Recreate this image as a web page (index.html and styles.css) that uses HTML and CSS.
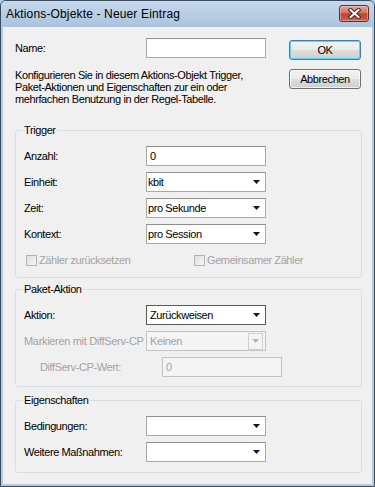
FILE: index.html
```html
<!DOCTYPE html>
<html lang="de">
<head>
  <meta charset="UTF-8">
  <meta name="viewport" content="width=device-width, initial-scale=1.0">
  <title>Aktions-Objekte - Neuer Eintrag</title>
  <link rel="stylesheet" href="styles.css">
</head>
<body>

  <div class="window">
    <div class="titlebar">
      <span class="title">Aktions-Objekte - Neuer Eintrag</span>
      <button class="close" aria-label="Schließen">
        <svg width="13" height="11" viewBox="0 0 13 11">
          <path d="M2.5 2 L10.5 9 M10.5 2 L2.5 9" stroke="#4b2019" stroke-width="4" stroke-linecap="square" fill="none"/>
          <path d="M2.5 2 L10.5 9 M10.5 2 L2.5 9" stroke="#fff" stroke-width="2" stroke-linecap="square" fill="none"/>
        </svg>
      </button>
    </div>

    <div class="client">
      <div class="top">
        <div class="intro">
          <div class="field name-row">
            <label for="name">Name:</label>
            <input class="edit" type="text" id="name">
          </div>
          <p class="hint">Konfigurieren Sie in diesem Aktions-Objekt Trigger,<br>Paket-Aktionen und Eigenschaften zur ein oder<br>mehrfachen Benutzung in der Regel-Tabelle.</p>
        </div>
        <div class="buttons">
          <button class="btn default">OK</button>
          <button class="btn">Abbrechen</button>
        </div>
      </div>

      <!-- Trigger -->
      <fieldset class="group trigger">
        <legend>Trigger</legend>
        <div class="field">
          <label>Anzahl:</label>
          <input class="edit" type="text" value="0">
        </div>
        <div class="field">
          <label>Einheit:</label>
          <div class="combo"><span class="value">kbit</span><svg class="arrow" width="7" height="4" viewBox="0 0 7 4"><polygon points="0,0 7,0 3.5,4" fill="#10104a"/></svg></div>
        </div>
        <div class="field">
          <label>Zeit:</label>
          <div class="combo"><span class="value">pro Sekunde</span><svg class="arrow" width="7" height="4" viewBox="0 0 7 4"><polygon points="0,0 7,0 3.5,4" fill="#10104a"/></svg></div>
        </div>
        <div class="field">
          <label>Kontext:</label>
          <div class="combo"><span class="value">pro Session</span><svg class="arrow" width="7" height="4" viewBox="0 0 7 4"><polygon points="0,0 7,0 3.5,4" fill="#10104a"/></svg></div>
        </div>
        <div class="field checks">
          <span class="check first"><span class="box"></span>Zähler zurücksetzen</span>
          <span class="check"><span class="box"></span>Gemeinsamer Zähler</span>
        </div>
      </fieldset>

      <!-- Paket-Aktion -->
      <fieldset class="group paket">
        <legend>Paket-Aktion</legend>
        <div class="field">
          <label>Aktion:</label>
          <div class="combo focused"><span class="value">Zurückweisen</span><svg class="arrow" width="7" height="4" viewBox="0 0 7 4"><polygon points="0,0 7,0 3.5,4" fill="#10104a"/></svg></div>
        </div>
        <div class="field disabled">
          <label class="tight">Markieren mit DiffServ-CP</label>
          <div class="combo off"><span class="value">Keinen</span><span class="drop"><svg width="7" height="4" viewBox="0 0 7 4"><polygon points="0,0 7,0 3.5,4" fill="#b4b4b4"/></svg></span></div>
        </div>
        <div class="field disabled">
          <label class="indent">DiffServ-CP-Wert:</label>
          <input class="edit off" type="text" value="0" disabled>
        </div>
      </fieldset>

      <!-- Eigenschaften -->
      <fieldset class="group props">
        <legend>Eigenschaften</legend>
        <div class="field">
          <label>Bedingungen:</label>
          <div class="combo"><span class="value"></span><svg class="arrow" width="7" height="4" viewBox="0 0 7 4"><polygon points="0,0 7,0 3.5,4" fill="#10104a"/></svg></div>
        </div>
        <div class="field">
          <label>Weitere Maßnahmen:</label>
          <div class="combo"><span class="value"></span><svg class="arrow" width="7" height="4" viewBox="0 0 7 4"><polygon points="0,0 7,0 3.5,4" fill="#10104a"/></svg></div>
        </div>
      </fieldset>
    </div>
  </div>

</body>
</html>
```

FILE: styles.css
```css
body {
  margin: 0;
  font-family: 'Liberation Sans', Arial, sans-serif;
  font-size: 11px;
  letter-spacing: -0.4px;
  color: #000;
  background-color: #b6cbe3;
}

/* Window frame */
.window {
  box-sizing: border-box;
  width: 375px;
  height: 487px;
  border: 1px solid #3a4a5f;
  border-radius: 6px 6px 0 0;
  background-color: #b6cbe3;
  padding: 0 2px 2px;
  display: flex;
  flex-direction: column;
}

.titlebar {
  height: 26px;
  margin: 0 -2px;
  padding: 0 5px 0 5px;
  display: flex;
  align-items: flex-start;
  border-radius: 5px 5px 0 0;
  background: linear-gradient(#c6d8ec, #abc3de);
}

.title {
  margin-top: 6px;
  font-size: 12px;
  line-height: 14px;
  letter-spacing: 0.15px;
}

.close {
  margin: 4px 0 0 auto;
  width: 30px;
  height: 17px;
  padding: 0;
  border: 1px solid #73291f;
  border-radius: 3px;
  background: linear-gradient(#e3a296 0%, #d57465 45%, #c3402f 52%, #cf5f4d 100%);
  box-shadow: inset 0 0 0 1px rgba(255, 255, 255, 0.35);
  display: flex;
  align-items: center;
  justify-content: center;
}

.client {
  flex: 1;
  background-color: #f0f0f0;
  padding: 11px 10px 0 12px;
}

/* Top area */
.top {
  display: flex;
  justify-content: space-between;
}

.field {
  display: flex;
  align-items: center;
  height: 20px;
}

.field label {
  width: 122px;
  flex-shrink: 0;
  line-height: 12px;
  white-space: nowrap;
}

.field label.tight {
  letter-spacing: -0.32px;
}

.name-row label {
  width: 131px;
}

.hint {
  margin: 11px 0 0;
  line-height: 12px;
}

.buttons {
  display: flex;
  flex-direction: column;
  margin-right: 1px;
}

.btn {
  width: 72px;
  height: 20px;
  margin-top: 9px;
  padding: 0;
  font-family: inherit;
  font-size: 11px;
  letter-spacing: -0.4px;
  color: #000;
  border: 1px solid #707070;
  border-radius: 3px;
  background: linear-gradient(#f2f2f2 0%, #ebebeb 48%, #dddddd 52%, #cfcfcf 100%);
  box-shadow: inset 0 0 0 1px rgba(255, 255, 255, 0.7);
}

.btn.default {
  margin-top: 2px;
  border-color: #3c7fb1;
  box-shadow: inset 0 0 0 1px #5fd2f8;
}

/* Inputs */
.edit {
  box-sizing: border-box;
  width: 120px;
  height: 20px;
  margin: 0;
  padding: 0 3px;
  font-family: inherit;
  font-size: 11px;
  letter-spacing: -0.4px;
  color: #000;
  background-color: #fff;
  border: 1px solid #a9a9a9;
  border-top-color: #8f8f8f;
  border-radius: 0;
  outline: none;
}

.edit.off {
  color: #a3a3a3;
  background-color: #f4f4f4;
  border-color: #c3c3c3;
}

.combo {
  box-sizing: border-box;
  width: 120px;
  height: 20px;
  padding: 0 5px 0 1px;
  display: flex;
  align-items: center;
  background-color: #fff;
  border: 1px solid #a9a9a9;
  border-top-color: #8f8f8f;
}

.combo .value {
  flex: 1;
}

.combo.focused {
  padding-left: 3px;
  border-color: #5a5a5a;
}

.combo.off {
  padding: 0 2px 0 3px;
  color: #a3a3a3;
  background-color: #f4f4f4;
  border-color: #c3c3c3;
}

.drop {
  box-sizing: border-box;
  width: 15px;
  height: 17px;
  border: 1px solid #cfcfcf;
  background-color: #f4f4f4;
  display: flex;
  align-items: center;
  justify-content: center;
}

/* Group boxes */
.group {
  min-width: 0;
  margin: 0;
  border: 1px solid #d5dfe5;
  border-radius: 3px;
  padding: 10px 7px 7px 8px;
}

.group legend {
  padding: 0 1px;
  margin-left: -1px;
  line-height: 12px;
}

.group .field + .field {
  margin-top: 6px;
}

.trigger {
  margin-top: 19px;
}

.paket {
  margin-top: 5px;
  padding-bottom: 9px;
}

.props {
  margin-top: 7px;
  padding-bottom: 10px;
}

.disabled {
  color: #a3a3a3;
}

.indent {
  padding-left: 16px;
}

/* Checkboxes */
.checks {
  color: #a3a3a3;
}

.check {
  display: flex;
  align-items: center;
}

.check.first {
  width: 168px;
}

.box {
  box-sizing: border-box;
  width: 11px;
  height: 11px;
  margin: 0 2px 0 2px;
  border: 1px solid #b3b3b3;
  background: linear-gradient(135deg, #dedede, #f8f8f8);
}
```
